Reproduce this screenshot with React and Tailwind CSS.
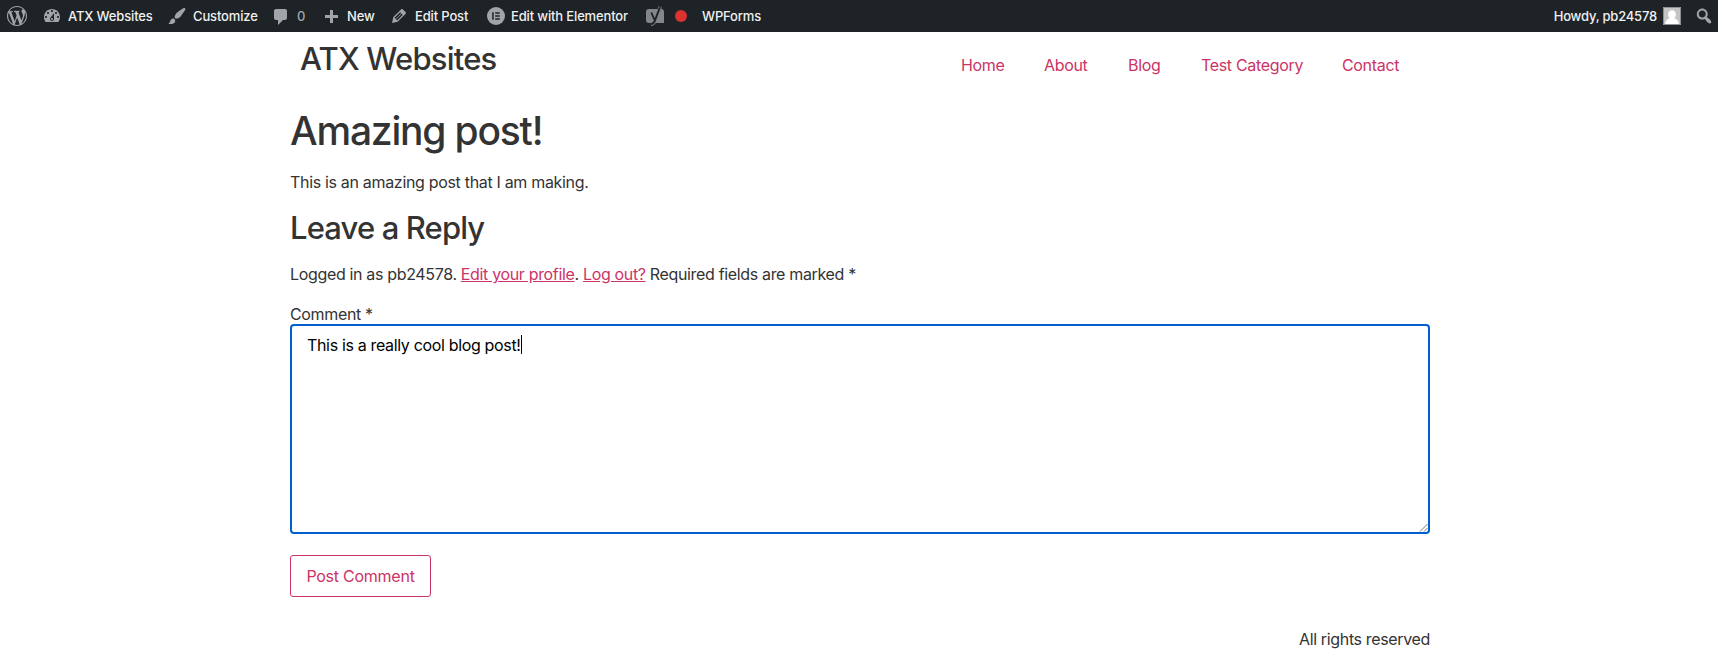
import React from 'react';

const paths = {
  wordpress:
    'M20 10c0-5.51-4.49-10-10-10C4.48 0 0 4.49 0 10c0 5.52 4.48 10 10 10 5.51 0 10-4.48 10-10zM7.78 15.37L4.37 6.22c.55-.02 1.17-.08 1.17-.08.5-.06.44-1.13-.06-1.11 0 0-1.45.11-2.37.11-.18 0-.37 0-.58-.01C4.12 2.69 6.87 1.11 10 1.11c2.33 0 4.45.87 6.05 2.34-.68-.11-1.65.39-1.65 1.58 0 .74.45 1.36.9 2.1.35.61.55 1.36.55 2.46 0 1.49-1.4 5-1.4 5l-3.03-8.37c.54-.02.82-.17.82-.17.5-.05.44-1.25-.06-1.22 0 0-1.44.12-2.38.12-.87 0-2.33-.12-2.33-.12-.5-.03-.56 1.2-.06 1.22l.92.08 1.26 3.41zM17.41 10c.24-.64.74-1.87.43-4.25.7 1.29 1.05 2.71 1.05 4.25 0 3.29-1.73 6.24-4.4 7.78.97-2.59 1.94-5.2 2.92-7.78zM6.1 18.09C3.12 16.65 1.11 13.53 1.11 10c0-1.3.23-2.48.72-3.59C3.25 10.3 4.67 14.2 6.1 18.09zm4.03-6.63l2.58 6.98c-.86.29-1.76.45-2.71.45-.79 0-1.57-.11-2.29-.33.81-2.38 1.62-4.74 2.42-7.1z',
  dashboard:
    'M3.76 16h12.48c1.1-1.37 1.76-3.11 1.76-5 0-4.42-3.58-8-8-8s-8 3.58-8 8c0 1.89.66 3.63 1.76 5zM10 4c.55 0 1 .45 1 1s-.45 1-1 1-1-.45-1-1 .45-1 1-1zM6 6c.55 0 1 .45 1 1s-.45 1-1 1-1-.45-1-1 .45-1 1-1zm8 0c.55 0 1 .45 1 1s-.45 1-1 1-1-.45-1-1 .45-1 1-1zm-5.37 5.55L12 7v6c0 1.1-.9 2-2 2s-2-.9-2-2c0-.57.24-1.08.63-1.45zM4 10c.55 0 1 .45 1 1s-.45 1-1 1-1-.45-1-1 .45-1 1-1zm12 0c.55 0 1 .45 1 1s-.45 1-1 1-1-.45-1-1 .45-1 1-1zm-5 3c0-.55-.45-1-1-1s-1 .45-1 1 .45 1 1 1 1-.45 1-1z',
  brush:
    'M18.33 3.57s.27-.8-.31-1.36c-.53-.52-1.22-.24-1.22-.24-.61.3-5.76 3.47-7.67 5.57-.86.96-2.06 3.79-1.09 4.82.92.98 3.96-.17 4.79-1 2.06-2.06 5.21-7.17 5.5-7.79zM1.4 17.65c2.37-1.56 1.46-3.41 3.23-4.64.93-.65 2.22-.62 3.08.29.63.67.8 2.57-.16 3.46-1.57 1.45-4 1.55-6.15.89z',
  comment: 'M5 2h9c1.1 0 2 .9 2 2v7c0 1.1-.9 2-2 2h-2l-5 5v-5H5c-1.1 0-2-.9-2-2V4c0-1.1.9-2 2-2z',
  plus: 'M17 7v3h-5v5H9v-5H4V7h5V2h3v5h5z',
  edit:
    'M13.89 3.39l2.71 2.72c.46.46.42 1.24.03 1.64l-8.01 8.02-5.56 1.16 1.16-5.58s7.6-7.63 7.99-8.03c.39-.39 1.22-.39 1.68.07zm-2.73 2.79l-5.59 5.61 1.11 1.11 5.54-5.65zm-2.97 8.23l5.58-5.6-1.07-1.08-5.59 5.6z',
  search:
    'M12.14 4.18c1.87 1.87 2.11 4.75.72 6.89.12.1.22.21.36.31.2.16.47.36.81.59.34.24.56.39.66.47.42.31.73.57.94.78.32.32.6.65.84 1 .25.35.44.69.59 1.04.14.35.21.68.18 1-.02.32-.14.59-.36.81s-.49.34-.81.36c-.31.02-.65-.04-.99-.19-.35-.14-.7-.34-1.04-.59-.35-.24-.68-.52-1-.84-.21-.21-.47-.52-.77-.93-.1-.13-.25-.35-.47-.66-.22-.32-.4-.57-.56-.78-.16-.2-.29-.35-.44-.5-2.07 1.09-4.69.76-6.44-.98-2.14-2.15-2.14-5.64 0-7.78 2.15-2.15 5.63-2.15 7.78 0zm-1.41 6.36c1.36-1.37 1.36-3.58 0-4.95-1.37-1.37-3.59-1.37-4.95 0-1.37 1.37-1.37 3.58 0 4.95 1.36 1.37 3.58 1.37 4.95 0z',
};

function Dashicon({ name, className = '' }) {
  return (
    <svg viewBox="0 0 20 20" fill="currentColor" className={`size-5 shrink-0 text-[#a0a5aa] ${className}`}>
      <path d={paths[name]} />
    </svg>
  );
}

function ElementorIcon() {
  return (
    <svg viewBox="0 0 18 18" className="size-[18px] shrink-0">
      <circle cx="9" cy="9" r="9" fill="#a0a5aa" />
      <path fill="#1d2327" d="M5.200 5.200h1.500v7.600H5.200zM8.200 5.200h4.600v1.500H8.200zM8.200 8.250h4.600v1.500H8.200zM8.200 11.300h4.600v1.500H8.200z" />
    </svg>
  );
}

function YoastIcon() {
  return (
    <svg viewBox="0 0 18 20" className="h-5 w-[18px] shrink-0">
      <path fill="#82878c" d="M3 3h12a3 3 0 0 1 3 3v11H3a3 3 0 0 1-3-3V6a3 3 0 0 1 3-3z" />
      <path fill="none" stroke="#82878c" strokeWidth="3.400" d="M14.300 .8L9 15c-.7 1.900-1.900 3-4 3.200" />
      <path fill="none" stroke="#1d2327" strokeWidth="1.900" d="M5.300 6.500L8.300 13.500M14 1.200L8.800 14.800c-.7 1.900-1.700 2.900-3.600 3.200" />
    </svg>
  );
}

function AdminBar() {
  return (
    <header className="flex h-8 items-center bg-[#1d2327] text-[13px] leading-8 font-[450] tracking-[-0.15px] whitespace-nowrap text-[#f0f0f1]">
      <div className="flex w-[42px] items-center pl-[7px]">
        <Dashicon name="wordpress" />
      </div>
      <div className="flex w-[125px] items-center gap-1.5">
        <Dashicon name="dashboard" />
        <span>ATX Websites</span>
      </div>
      <div className="flex w-[104px] items-center gap-1.5">
        <Dashicon name="brush" />
        <span>Customize</span>
      </div>
      <div className="flex w-[50px] items-center gap-1.5">
        <Dashicon name="comment" className="mt-0.5" />
        <span className="text-[#a0a5aa]">0</span>
      </div>
      <div className="flex w-[68px] items-center gap-1.5">
        <Dashicon name="plus" className="mt-[3px]" />
        <span>New</span>
      </div>
      <div className="flex w-[98px] items-center gap-1.5">
        <Dashicon name="edit" />
        <span>Edit Post</span>
      </div>
      <div className="flex w-[159px] items-center gap-[6px]">
        <ElementorIcon />
        <span>Edit with Elementor</span>
      </div>
      <div className="flex w-[56px] items-center gap-[11px]">
        <YoastIcon />
        <span className="size-3 rounded-full bg-[#dc3232]" />
      </div>
      <span>WPForms</span>
      <div className="ml-auto flex items-center">
        <span className="tracking-[-0.2px]">Howdy, pb24578</span>
        <svg viewBox="0 0 18 18" className="ml-1.5 size-[18px]">
          <path fill="#c5c5c5" d="M0 0h18v18H0z" />
          <path fill="#fff" d="M9 3.2c2.4 0 3.9 1.7 3.9 4 0 1.6-.7 2.9-1.7 3.6.3 1 4 1.200 4.700 6.200H2.100c.7-5 4.400-5.200 4.700-6.200C5.800 10.100 5.100 8.800 5.100 7.200c0-2.300 1.500-4 3.900-4z" />
          <path fill="none" stroke="#8c8f94" d="M.5.5h17v17H.5z" />
        </svg>
        <Dashicon name="search" className="mr-1 ml-[13px]" />
      </div>
    </header>
  );
}

export default function App() {
  return (
    <div className="min-h-[660px] bg-white font-['Inter',sans-serif] text-[#333]">
      <AdminBar />
      <div className="ml-[290px] w-[1140px] text-base leading-6">
        <div className="flex h-[75px] justify-between pt-2 pr-[30px] pl-2.5">
          <div className="text-[31px] leading-[38px] font-medium tracking-[-0.8px]">ATX Websites</div>
          <nav className="flex pt-[13px] tracking-[-0.33px] text-[#cc3366]">
            <a className="w-[83px]">Home</a>
            <a className="w-[84px]">About</a>
            <a className="w-[73px]">Blog</a>
            <a className="w-[141px]">Test Category</a>
            <a className="w-[58px]">Contact</a>
          </nav>
        </div>
        <h1 className="text-[39px] leading-[48px] font-medium tracking-[-1.2px]">Amazing post!</h1>
        <p className="mt-[15px] tracking-[-0.32px]">This is an amazing post that I am making.</p>
        <h2 className="mt-[15px] text-[31px] leading-[38px] font-medium tracking-[-0.87px]">Leave a Reply</h2>
        <p className="mt-[15px] tracking-[-0.34px]">
          Logged in as pb24578. <a className="text-[#cc3366] underline">Edit your profile</a>.{' '}
          <a className="text-[#cc3366] underline">Log out?</a> Required fields are marked *
        </p>
        <div className="mt-4 h-[22px] tracking-[-0.35px]">Comment *</div>
        <div className="flex h-[210px] rounded-[4px] border-2 border-[#0060d0] pt-[7px] pl-[15px] tracking-[-0.34px] text-black">
          <span>This is a really cool blog post!</span>
          <span className="mt-0.5 h-[19px] w-px bg-black" />
          <svg viewBox="0 0 9 9" className="mt-auto ml-auto size-[9px]" fill="none" stroke="#777">
            <path d="M1 8.500L8.500 1M5 8.500L8.500 5" />
          </svg>
        </div>
        <button className="mt-[21px] flex h-[42px] w-[141px] items-center justify-center rounded-[3px] border border-[#cc3366] tracking-[-0.25px] text-[#cc3366]">
          Post Comment
        </button>
        <footer className="mt-[30px] text-right tracking-[-0.35px]">All rights reserved</footer>
      </div>
    </div>
  );
}
